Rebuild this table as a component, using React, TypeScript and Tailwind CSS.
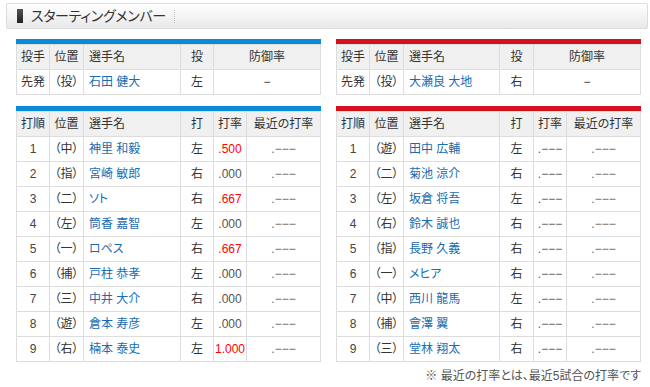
import React from "react";

type Bat = { o: string; p: string; n: string; h: string; a: string; red?: boolean };

const left: Bat[] = [
  { o: "1", p: "（中）", n: "神里 和毅", h: "左", a: ".500", red: true },
  { o: "2", p: "（指）", n: "宮崎 敏郎", h: "右", a: ".000" },
  { o: "3", p: "（二）", n: "ソト", h: "右", a: ".667", red: true },
  { o: "4", p: "（左）", n: "筒香 嘉智", h: "左", a: ".000" },
  { o: "5", p: "（一）", n: "ロペス", h: "右", a: ".667", red: true },
  { o: "6", p: "（捕）", n: "戸柱 恭孝", h: "左", a: ".000" },
  { o: "7", p: "（三）", n: "中井 大介", h: "右", a: ".000" },
  { o: "8", p: "（遊）", n: "倉本 寿彦", h: "左", a: ".000" },
  { o: "9", p: "（右）", n: "楠本 泰史", h: "左", a: "1.000", red: true },
];

const DASH = ".−−−";

const right: Bat[] = [
  { o: "1", p: "（遊）", n: "田中 広輔", h: "左", a: DASH },
  { o: "2", p: "（二）", n: "菊池 涼介", h: "右", a: DASH },
  { o: "3", p: "（左）", n: "坂倉 将吾", h: "左", a: DASH },
  { o: "4", p: "（右）", n: "鈴木 誠也", h: "右", a: DASH },
  { o: "5", p: "（指）", n: "長野 久義", h: "右", a: DASH },
  { o: "6", p: "（一）", n: "メヒア", h: "右", a: DASH },
  { o: "7", p: "（中）", n: "西川 龍馬", h: "左", a: DASH },
  { o: "8", p: "（捕）", n: "會澤 翼", h: "右", a: DASH },
  { o: "9", p: "（三）", n: "堂林 翔太", h: "右", a: DASH },
];

const th = "h-[25px] border border-[#dddddd] bg-[#f0f0f0] font-normal text-[#333] p-0";
const td = "h-[25px] border border-[#dddddd] p-0";

function Pitcher({ color, name, hand, wName, wHand }: { color: string; name: string; hand: string; wName: number; wHand: number }) {
  return (
    <div className="w-[305px]">
      <div className={`h-[5px] ${color}`} />
      <table className="w-[305px] table-fixed border-collapse text-[12px]">
        <colgroup>
          <col className="w-[33px]" />
          <col className="w-[34px]" />
          <col style={{ width: wName }} />
          <col style={{ width: wHand }} />
          <col />
        </colgroup>
        <thead>
          <tr>
            <th className={`${th} text-center`}>投手</th>
            <th className={`${th} text-center`}>位置</th>
            <th className={`${th} text-left pl-[5px]`}>選手名</th>
            <th className={`${th} text-center`}>投</th>
            <th className={`${th} text-center`}>防御率</th>
          </tr>
        </thead>
        <tbody>
          <tr>
            <td className={`${td} text-center text-[#333]`}>先発</td>
            <td className={`${td} text-center text-[#333]`}>（投）</td>
            <td className={`${td} pl-[5px] text-[#1a6cb0]`}>{name}</td>
            <td className={`${td} text-center text-[#333]`}>{hand}</td>
            <td className={`${td} text-center text-[#333]`}>−</td>
          </tr>
        </tbody>
      </table>
    </div>
  );
}

function Batting({ color, rows, wName, wHand }: { color: string; rows: Bat[]; wName: number; wHand: number }) {
  return (
    <div className="w-[305px]">
      <div className={`h-[5px] ${color}`} />
      <table className="w-[305px] table-fixed border-collapse text-[12px]">
        <colgroup>
          <col className="w-[33px]" />
          <col className="w-[34px]" />
          <col style={{ width: wName }} />
          <col style={{ width: wHand }} />
          <col className="w-[33px]" />
          <col />
        </colgroup>
        <thead>
          <tr>
            <th className={`${th} text-center`}>打順</th>
            <th className={`${th} text-center`}>位置</th>
            <th className={`${th} text-left pl-[5px]`}>選手名</th>
            <th className={`${th} text-center`}>打</th>
            <th className={`${th} text-center`}>打率</th>
            <th className={`${th} text-center`}>最近の打率</th>
          </tr>
        </thead>
        <tbody>
          {rows.map((r) => (
            <tr key={r.o}>
              <td className={`${td} text-center text-[#444]`}>{r.o}</td>
              <td className={`${td} text-center text-[#333]`}>{r.p}</td>
              <td className={`${td} pl-[5px] text-[#1a6cb0]`}>{r.n}</td>
              <td className={`${td} text-center text-[#333]`}>{r.h}</td>
              <td className={`${td} text-center ${r.red ? "text-[#ff0000]" : "text-[#555]"}`}>{r.a}</td>
              <td className={`${td} text-center text-[#666]`}>{DASH}</td>
            </tr>
          ))}
        </tbody>
      </table>
    </div>
  );
}

export default function App() {
  return (
    <div
      className="w-[650px] h-[387px] bg-white overflow-hidden [font-feature-settings:'palt']"
      style={{ fontFamily: '"Liberation Sans", "Noto Sans CJK JP", sans-serif' }}
    >
      <div className="pt-[3px] pl-[6px] pr-[2px]">
        <div className="h-[26px] flex items-center rounded-[2px] border border-[#dcdcdc] bg-gradient-to-b from-[#ffffff] via-[#f4f4f4] to-[#e8e8e8] pl-[10px]">
          <div className="w-[6px] h-[14px] bg-gradient-to-b from-[#555] to-[#222]" />
          <span className="ml-[8px] text-[14px] text-[#333] tracking-[-0.3px]">スターティングメンバー</span>
          <span className="ml-[8px] h-[13px] border-l border-dotted border-[#bbb]" />
        </div>
      </div>
      <div className="flex gap-[15px] pl-[16px] mt-[10px]">
        <div className="flex flex-col gap-[11px]">
          <Pitcher color="bg-[#0a8bd8]" name="石田 健大" hand="左" wName={97} wHand={33} />
          <Batting color="bg-[#0a8bd8]" rows={left} wName={97} wHand={33} />
        </div>
        <div className="flex flex-col gap-[11px]">
          <Pitcher color="bg-[#d2101e]" name="大瀬良 大地" hand="右" wName={96} wHand={34} />
          <Batting color="bg-[#d2101e]" rows={right} wName={96} wHand={34} />
          <div className="-mt-[6px] text-right text-[12px] text-[#555]">※ 最近の打率とは、最近5試合の打率です</div>
        </div>
      </div>
    </div>
  );
}
